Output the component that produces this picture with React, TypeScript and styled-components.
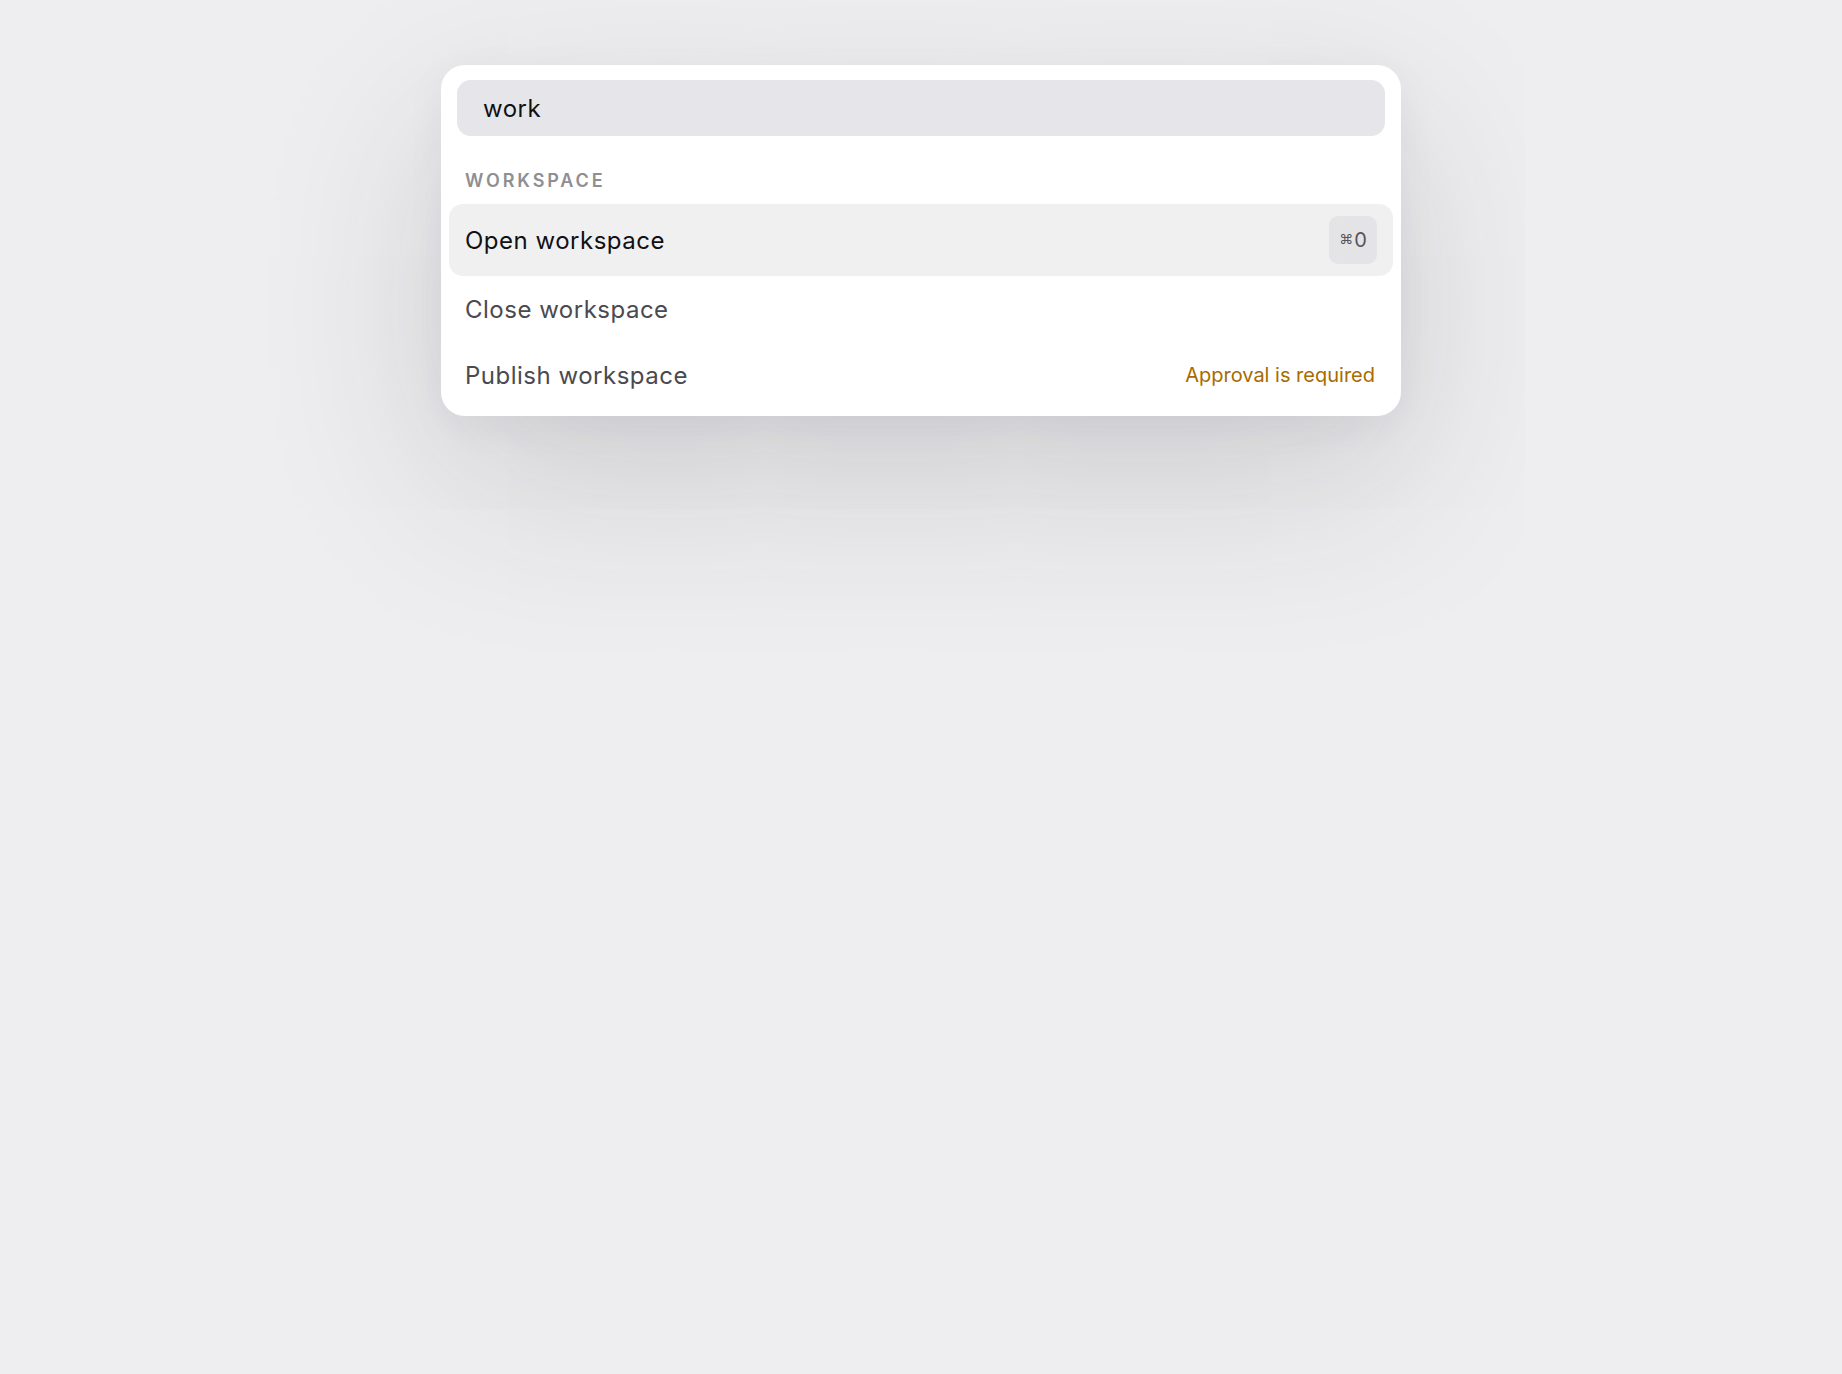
import styled, {createGlobalStyle} from "styled-components";

const GlobalStyle = createGlobalStyle`
    html, body {
        margin: 0;
        padding: 0;
        background-color: #eeeef0;
        font-family: Inter, "Noto Sans", "Liberation Sans", sans-serif;
    }
`;

type Command = {
    label: string;
    shortcut?: string;
    note?: string;
    active?: boolean;
}

const commands: Command[] = [
    {label: "Open workspace", shortcut: "0", active: true},
    {label: "Close workspace"},
    {label: "Publish workspace", note: "Approval is required"},
];

export default function App() {
    return <Page>
        <GlobalStyle/>
        <Palette>
            <SearchInput value="work" readOnly/>
            <GroupLabel>Workspace</GroupLabel>
            <CommandList>
                {commands.map((cmd) => <CommandItem key={cmd.label} $active={!!cmd.active}>
                    <span>{cmd.label}</span>
                    {cmd.shortcut && <Shortcut><CmdGlyph>⌘</CmdGlyph>{cmd.shortcut}</Shortcut>}
                    {cmd.note && <Note>{cmd.note}</Note>}
                </CommandItem>)}
            </CommandList>
        </Palette>
    </Page>
};

const Page = styled.div`
    min-height: 100vh;
    box-sizing: border-box;

    display: flex;
    flex-direction: column;
    align-items: center;

    padding-top: 65px;
`;

const Palette = styled.div`
    width: 960px;
    box-sizing: border-box;

    display: flex;
    flex-direction: column;

    padding: 15px 8px 8px;

    background-color: #ffffff;
    border-radius: 24px;
    box-shadow: 0 65px 180px rgba(40, 40, 50, 0.17),
                0 10px 40px rgba(40, 40, 50, 0.05);
`;

const SearchInput = styled.input`
    height: 56px;
    box-sizing: border-box;
    margin: 0 8px;
    padding: 0 26px;

    border: none;
    outline: none;
    border-radius: 14px;
    background-color: #e5e5ea;

    font-family: inherit;
    font-size: 24px;
    letter-spacing: 0.5px;
    color: #111113;
`;

const GroupLabel = styled.div`
    padding: 33px 16px 11px;

    font-size: 18px;
    line-height: 24px;
    font-weight: 600;
    letter-spacing: 0.16em;
    text-transform: uppercase;
    color: #8e8e93;
`;

const CommandList = styled.ul`
    list-style: none;
    margin: 0;
    padding: 0;

    display: flex;
    flex-direction: column;
`;

const CommandItem = styled.li<{ $active: boolean }>`
    min-height: 66px;
    box-sizing: border-box;

    display: flex;
    flex-direction: row;
    justify-content: space-between;
    align-items: center;

    padding: 12px 16px;
    border-radius: 14px;
    background-color: ${p => p.$active ? "#f0f0f1" : "transparent"};

    font-size: 24px;
    letter-spacing: 0.5px;
    color: ${p => p.$active ? "#111113" : "#4a4a50"};
`;

const Shortcut = styled.kbd`
    width: 48px;
    height: 48px;

    display: flex;
    justify-content: center;
    align-items: center;
    gap: 1px;

    border-radius: 9px;
    background-color: #e4e4e6;

    font-family: inherit;
    font-size: 20px;
    letter-spacing: 0;
    color: #55555a;
`;

const CmdGlyph = styled.span`
    font-size: 14px;
    margin-bottom: 3px;
`;

const Note = styled.span`
    margin-right: 2px;
    font-size: 20px;
    letter-spacing: 0;
    color: #a86b00;
`;
